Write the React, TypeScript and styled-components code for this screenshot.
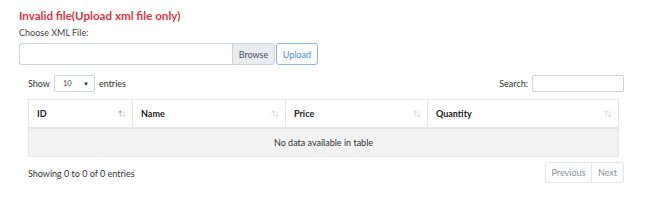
import React from "react";
import styled, { createGlobalStyle } from "styled-components";

const Global = createGlobalStyle`
  html, body { margin: 0; padding: 0; background: #fff; }
  body { font-family: "Lato", "Open Sans", sans-serif; color: #212529; font-size: 9px; }
  * { box-sizing: border-box; }
`;

const Page = styled.div`
  padding: 8px 0 0 19px;
  width: 650px;
`;

const Title = styled.h2`
  margin: 0;
  font-size: 11.6px;
  font-weight: 700;
  color: #dc3545;
  line-height: 16px;
`;

const Label = styled.div`
  margin-top: 3px;
  font-size: 9px;
  color: #444;
  line-height: 12px;
`;

const UploadRow = styled.div`
  display: flex;
  align-items: stretch;
  margin-top: 4px;
  height: 22px;
`;

const FileBox = styled.div`
  width: 213px;
  border: 1px solid #ced4da;
  border-right: none;
  border-radius: 3px 0 0 3px;
  background: #fff;
`;

const BrowseBtn = styled.div`
  width: 43px;
  display: flex;
  align-items: center;
  justify-content: center;
  background: #e9ecef;
  border: 1px solid #ced4da;
  border-radius: 0 3px 3px 0;
  color: #495057;
  font-size: 9px;
`;

const UploadBtn = styled.button`
  margin-left: 1px;
  width: 42px;
  border: 1px solid #7fb8f7;
  border-radius: 3px;
  background: #fff;
  color: #3b8ff0;
  font-family: inherit;
  font-size: 9px;
  padding: 0;
`;

const TableArea = styled.div`
  width: 596px;
  margin: 9px 0 0 9px;
`;

const TopBar = styled.div`
  display: flex;
  justify-content: space-between;
  align-items: center;
  height: 18px;
`;

const Inline = styled.div`
  display: flex;
  align-items: center;
  gap: 4px;
  color: #333;
`;

const Select = styled.div`
  width: 41px;
  height: 17px;
  border: 1px solid #ced4da;
  border-radius: 2px;
  display: flex;
  align-items: center;
  justify-content: space-between;
  padding: 0 5px 0 8px;
  font-size: 7.5px;
  color: #444;
`;

const Caret = styled.span`
  font-size: 6px;
  color: #333;
`;

const SearchInput = styled.div`
  width: 92px;
  height: 17px;
  border: 1px solid #ced4da;
  border-radius: 2px;
`;

const Table = styled.table`
  margin-top: 7px;
  width: 590px;
  border-collapse: collapse;
  border: 1px solid #e6e6e6;
  table-layout: fixed;
`;

const Th = styled.th<{ $w: number }>`
  width: ${(p) => p.$w}px;
  height: 28px;
  text-align: left;
  font-weight: 700;
  font-size: 9px;
  color: #222;
  padding: 0 7px 0 8px;
  border: 1px solid #e6e6e6;
  border-bottom: 2px solid #e6e6e6;
`;

const ThInner = styled.div`
  display: flex;
  justify-content: space-between;
  align-items: center;
`;

const Arrows = styled.span<{ $active?: boolean }>`
  font-size: 7px;
  font-weight: 400;
  letter-spacing: -1.5px;
  color: #d0d0d0;
  & > b { font-weight: 400; color: ${(p) => (p.$active ? "#888" : "#d0d0d0")}; }
`;

const Td = styled.td`
  height: 29px;
  background: #f2f2f2;
  text-align: center;
  font-size: 9px;
  color: #333;
  border: 1px solid #e6e6e6;
`;

const BottomBar = styled.div`
  display: flex;
  justify-content: space-between;
  align-items: center;
  margin-top: 5px;
`;

const Info = styled.div`
  color: #333;
  margin-top: 2px;
`;

const Pager = styled.div`
  display: flex;
  height: 21px;
`;

const PageBtn = styled.div<{ $w: number; $first?: boolean }>`
  width: ${(p) => p.$w}px;
  display: flex;
  align-items: center;
  justify-content: center;
  border: 1px solid #e3e6ea;
  ${(p) => (p.$first ? "border-radius: 3px 0 0 3px;" : "border-left: none; border-radius: 0 3px 3px 0;")}
  color: #8a9097;
  font-size: 9px;
`;

const cols: { name: string; w: number; active?: boolean }[] = [
  { name: "ID", w: 104, active: true },
  { name: "Name", w: 153 },
  { name: "Price", w: 142 },
  { name: "Quantity", w: 191 },
];

export default function App() {
  return (
    <>
      <Global />
      <Page>
        <Title>Invalid file(Upload xml file only)</Title>
        <Label>Choose XML File:</Label>
        <UploadRow>
          <FileBox />
          <BrowseBtn>Browse</BrowseBtn>
          <UploadBtn>Upload</UploadBtn>
        </UploadRow>
        <TableArea>
          <TopBar>
            <Inline>
              Show
              <Select>
                10 <Caret>▼</Caret>
              </Select>
              entries
            </Inline>
            <Inline>
              Search:
              <SearchInput />
            </Inline>
          </TopBar>
          <Table>
            <thead>
              <tr>
                {cols.map((c) => (
                  <Th key={c.name} $w={c.w}>
                    <ThInner>
                      {c.name}
                      <Arrows $active={c.active}>
                        <b>↑</b>↓
                      </Arrows>
                    </ThInner>
                  </Th>
                ))}
              </tr>
            </thead>
            <tbody>
              <tr>
                <Td colSpan={4}>No data available in table</Td>
              </tr>
            </tbody>
          </Table>
          <BottomBar>
            <Info>Showing 0 to 0 of 0 entries</Info>
            <Pager>
              <PageBtn $w={47} $first>Previous</PageBtn>
              <PageBtn $w={32}>Next</PageBtn>
            </Pager>
          </BottomBar>
        </TableArea>
      </Page>
    </>
  );
}
